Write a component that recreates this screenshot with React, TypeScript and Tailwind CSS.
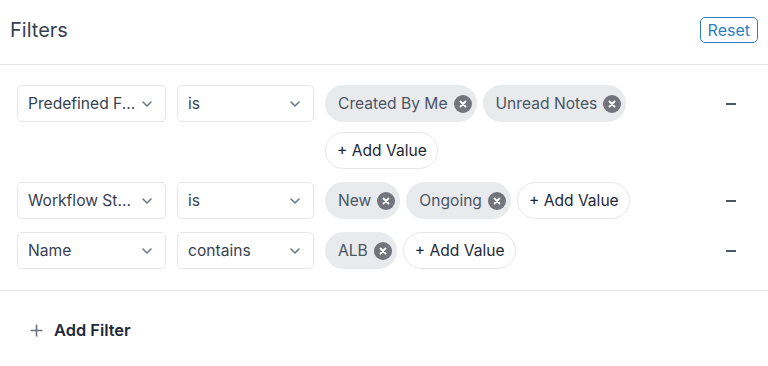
import React from "react";

const Chevron = () => (
  <svg width="10" height="6" viewBox="0 0 10 6" fill="none" className="shrink-0">
    <path d="M1 1l4 4 4-4" stroke="#6b7280" strokeWidth="1.5" strokeLinecap="round" strokeLinejoin="round" />
  </svg>
);

const Select = ({ label, w }: { label: string; w: string }) => (
  <div className={`${w} h-[37px] shrink-0 flex items-center justify-between pl-[10px] pr-[13px] border border-[#e5e7eb] rounded-[5px] bg-white`}>
    <span className="text-[15.6px] text-[#374151] whitespace-nowrap">{label}</span>
    <Chevron />
  </div>
);

const Chip = ({ label }: { label: string }) => (
  <div className="h-[37px] flex items-center pl-[13px] pr-[5px] rounded-full bg-[#e8eaed]">
    <span className="text-[15.6px] text-[#4b5563] whitespace-nowrap">{label}</span>
    <span className="ml-[6px] w-[18px] h-[18px] rounded-full bg-[#72767c] flex items-center justify-center">
      <svg width="8" height="8" viewBox="0 0 8 8">
        <path d="M1.5 1.5l5 5M6.5 1.5l-5 5" stroke="white" strokeWidth="1.8" strokeLinecap="round" />
      </svg>
    </span>
  </div>
);

const AddValue = () => (
  <div className="h-[37px] flex items-center pl-[11px] pr-[10px] rounded-full border border-[#e5e7eb] bg-white">
    <span className="text-[15.6px] text-[#1f2937] whitespace-nowrap">+ Add Value</span>
  </div>
);

const Minus = () => (
  <div className="w-[30px] h-[37px] shrink-0 flex items-center justify-center">
    <div className="w-[10px] h-[2px] bg-[#4b5563]" />
  </div>
);

const Row = ({ f, op, chips }: { f: string; op: string; chips: string[] }) => (
  <div className="flex items-start">
    <Select label={f} w="w-[149px]" />
    <div className="w-[11px] shrink-0" />
    <Select label={op} w="w-[137px]" />
    <div className="w-[11px] shrink-0" />
    <div className="flex-1 flex flex-wrap gap-x-[6px] gap-y-[10px] pr-[80px]">
      {chips.map((c) => (
        <Chip key={c} label={c} />
      ))}
      <AddValue />
    </div>
    <Minus />
  </div>
);

export default function App() {
  return (
    <div className="w-[768px] h-[366px] bg-white overflow-hidden" style={{ fontFamily: "Inter, 'Noto Sans', sans-serif" }}>
      <div className="h-[65px] flex items-center justify-between pl-[10px] pr-[10px] pb-[4px] border-b border-[#e5e7eb]">
        <span className="text-[20px] text-[#374151]">Filters</span>
        <button className="h-[26px] px-[7px] border border-[#2d7fc3] rounded-[5px] text-[16px] text-[#2d7fc3] leading-none">
          Reset
        </button>
      </div>
      <div className="pt-[20px] pb-[21px] pl-[17px] pr-[22px] flex flex-col gap-[13px] border-b border-[#e5e7eb]">
        <Row f="Predefined F..." op="is" chips={["Created By Me", "Unread Notes"]} />
        <Row f="Workflow St..." op="is" chips={["New", "Ongoing"]} />
        <Row f="Name" op="contains" chips={["ALB"]} />
      </div>
      <div className="flex items-center pl-[30px] pt-[27px]">
        <svg width="13" height="13" viewBox="0 0 13 13">
          <path d="M6.5 0.5v12M0.5 6.5h12" stroke="#6b7280" strokeWidth="1.6" />
        </svg>
        <span className="ml-[11px] text-[16.4px] font-semibold text-[#1f2937]">Add Filter</span>
      </div>
    </div>
  );
}
